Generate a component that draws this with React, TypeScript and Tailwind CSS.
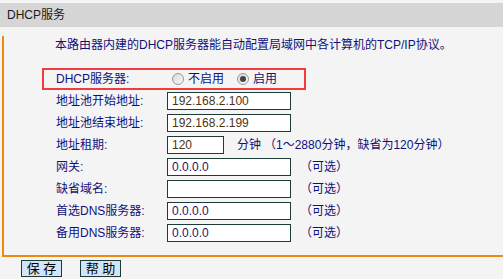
import React from "react";

const font = "font-['Liberation_Sans','Noto_Sans_CJK_SC',sans-serif]";

function Radio({ checked }: { checked?: boolean }) {
  return (
    <span className="w-[12px] h-[12px] rounded-full border border-[#9a9a9a] bg-gradient-to-br from-[#d8d8d8] to-[#fafafa] flex items-center justify-center">
      {checked && <span className="w-[6px] h-[6px] rounded-full bg-[#444]" />}
    </span>
  );
}

function Field({ value, w = "w-[124px]", tone = "text-[#4a3418]" }: { value: string; w?: string; tone?: string }) {
  return (
    <div className={`${w} h-[18px] border border-[#1c3a36] bg-white pl-[4px] flex items-center text-[12px] ${tone}`}>
      {value}
    </div>
  );
}

function Row({ label, children }: { label: string; children: React.ReactNode }) {
  return (
    <div className="h-[22px] flex items-center pl-[52px]">
      <div className="w-[111px] text-[12px] text-[#10107a]">{label}</div>
      {children}
    </div>
  );
}

const Optional = () => <span className="ml-[9px] text-[12px] text-[#10107a]">（可选）</span>;

export default function App() {
  return (
    <div className={`w-[503px] h-[279px] bg-[#f4f4f4] overflow-hidden ${font}`}>
      {/* title bar */}
      <div className="pt-[3px]">
        <div className="h-[24px] bg-[#d6d6d6] flex items-center pl-[7px] text-[12px] text-[#1a1a1a]">
          DHCP服务
        </div>
      </div>

      {/* panel */}
      <div className="ml-[2px] border-l-2 border-b-2 border-[#ec8a12] pb-[11px]">
        <div className="h-[18px] mt-[9px] pl-[51px] flex items-center text-[12px] text-[#10107a]">
          本路由器内建的DHCP服务器能自动配置局域网中各计算机的TCP/IP协议。
        </div>

        <div className="ml-[38px] mt-[14px] w-[264px] h-[22px] border-2 border-[#f03c3c] flex items-center pl-[12px] text-[12px] text-[#10107a]">
          <div className="w-[111px]">DHCP服务器:</div>
          <div className="ml-[5px] flex items-center gap-[4px]">
            <Radio />
            <span>不启用</span>
          </div>
          <div className="ml-[13px] flex items-center gap-[4px]">
            <Radio checked />
            <span>启用</span>
          </div>
        </div>

        <Row label="地址池开始地址:">
          <Field value="192.168.2.100" />
        </Row>
        <Row label="地址池结束地址:">
          <Field value="192.168.2.199" />
        </Row>
        <Row label="地址租期:">
          <Field value="120" w="w-[57px]" />
          <span className="ml-[13px] text-[12px] text-[#10107a]">分钟</span>
          <span className="ml-[3px] text-[12px] text-[#10107a]">（1～2880分钟，缺省为120分钟）</span>
        </Row>
        <Row label="网关:">
          <Field value="0.0.0.0" tone="text-[#2a1060]" />
          <Optional />
        </Row>
        <Row label="缺省域名:">
          <Field value="" />
          <Optional />
        </Row>
        <Row label="首选DNS服务器:">
          <Field value="0.0.0.0" tone="text-[#2a1060]" />
          <Optional />
        </Row>
        <Row label="备用DNS服务器:">
          <Field value="0.0.0.0" tone="text-[#2a1060]" />
          <Optional />
        </Row>
      </div>

      {/* buttons */}
      <div className="mt-[3px] pl-[21px] flex gap-[18px]">
        <button className="w-[41px] h-[17px] border border-[#1c3a36] bg-[#d2e4fa] text-[13px] leading-none text-black flex items-center justify-center">
          保 存
        </button>
        <button className="w-[41px] h-[17px] border border-[#1c3a36] bg-[#d2e4fa] text-[13px] leading-none text-black flex items-center justify-center">
          帮 助
        </button>
      </div>
    </div>
  );
}
